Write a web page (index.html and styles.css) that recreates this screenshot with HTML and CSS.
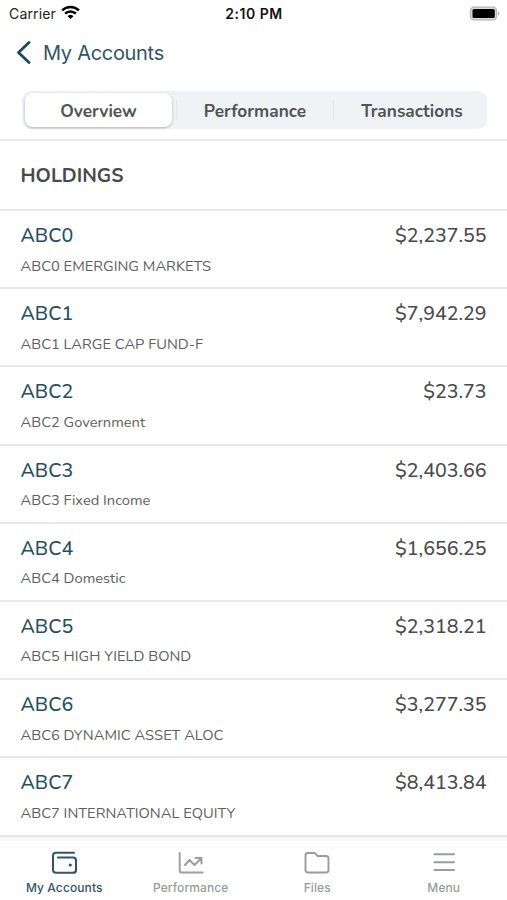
FILE: index.html
```html
<!DOCTYPE html>
<html lang="en">
<head>
<meta charset="utf-8">
<title>My Accounts</title>
<link rel="stylesheet" href="styles.css">
</head>
<body>
<div class="status">
  <div class="carrier"><span class="carrier-name">Carrier</span>
    <svg width="19" height="15" viewBox="0 0 19 15" fill="none" stroke="#000" stroke-width="2.5"><path d="M1.1 5.4a12 12 0 0 1 16.8 0M4.1 8.7a7.7 7.7 0 0 1 10.8 0"/><path d="M9.5 14l-2.9-2.8a4.2 4.2 0 0 1 5.8 0z" fill="#000" stroke="none"/></svg>
  </div>
  <div class="time">2:10 PM</div>
  <svg class="battery" width="31" height="15" viewBox="0 0 31 15"><rect x="1.500" y="1.200" width="26" height="12.600" rx="3.500" fill="#ddd" stroke="#b5b5b5" stroke-width="1.300"/><rect x="3.500" y="3" width="22.300" height="9" rx="1.500" fill="#000"/><path d="M29 5.200q3 2.200 0 4.500z" fill="#b5b5b5"/></svg>
</div>
<header class="title">
  <svg width="15" height="24" viewBox="0 0 15 24" fill="none" stroke="#1b485e" stroke-width="2.8" stroke-linecap="round" stroke-linejoin="round"><path d="M13 1.500L2.500 11.500l10.500 10"/></svg>
  <span>My Accounts</span>
</header>
<div class="tabs">
  <div class="tab active"><span>Overview</span></div>
  <div class="tab"><span>Performance</span></div>
  <div class="tab"><span>Transactions</span></div>
</div>
<main class="content">
  <h1 class="heading"><span>HOLDINGS</span></h1>
  <section class="row"><div class="line"><b>ABC0</b><span class="amount">$2,237.55</span></div><p>ABC0 EMERGING MARKETS</p></section>
  <section class="row"><div class="line"><b>ABC1</b><span class="amount">$7,942.29</span></div><p>ABC1 LARGE CAP FUND-F</p></section>
  <section class="row"><div class="line"><b>ABC2</b><span class="amount">$23.73</span></div><p>ABC2 Government</p></section>
  <section class="row"><div class="line"><b>ABC3</b><span class="amount">$2,403.66</span></div><p>ABC3 Fixed Income</p></section>
  <section class="row"><div class="line"><b>ABC4</b><span class="amount">$1,656.25</span></div><p>ABC4 Domestic</p></section>
  <section class="row"><div class="line"><b>ABC5</b><span class="amount">$2,318.21</span></div><p>ABC5 HIGH YIELD BOND</p></section>
  <section class="row"><div class="line"><b>ABC6</b><span class="amount">$3,277.35</span></div><p>ABC6 DYNAMIC ASSET ALOC</p></section>
  <section class="row"><div class="line"><b>ABC7</b><span class="amount">$8,413.84</span></div><p>ABC7 INTERNATIONAL EQUITY</p></section>
</main>
<nav class="bar">
  <div class="item current">
    <svg width="26" height="24" viewBox="0 0 26 24" fill="none" stroke="currentColor" stroke-width="2.1" stroke-linecap="round" stroke-linejoin="round"><path d="M23 1.800H5Q2 1.800 2 4.800v14q0 3 3 3h17q3 0 3-3V9.500q0-3-3-3H7"/><circle cx="19.300" cy="14" r="1.600" fill="currentColor" stroke="none"/></svg>
    <span>My Accounts</span>
  </div>
  <div class="item">
    <svg width="26" height="24" viewBox="0 0 26 24" fill="none" stroke="currentColor" stroke-width="1.900" stroke-linecap="round" stroke-linejoin="round"><path d="M1.700 2v17.500q0 2 2 2h21M7 14l4.500-5 5 5L23 7.500M17.500 7H23.500V12.500"/></svg>
    <span>Performance</span>
  </div>
  <div class="item">
    <svg width="26" height="24" viewBox="0 0 26 24" fill="none" stroke="currentColor" stroke-width="1.900" stroke-linejoin="round"><path d="M4 2h6q1 0 1.700.8l2 2.200h8.300q2.500 0 2.500 2.500v11.500q0 2.500-2.500 2.500H4q-2.500 0-2.500-2.500V4.500Q1.500 2 4 2z"/></svg>
    <span>Files</span>
  </div>
  <div class="item">
    <svg width="26" height="24" viewBox="0 0 26 24" fill="none" stroke="currentColor" stroke-width="2" stroke-linecap="round"><path d="M3.500 3.300h19.500M3.500 11.200h19.500M3.500 19h19.500"/></svg>
    <span>Menu</span>
  </div>
</nav>
</body>
</html>
```
FILE: styles.css
```css
* { box-sizing: border-box; }
body {
  margin: 0;
  width: 507px;
  height: 900px;
  overflow: hidden;
  display: flex;
  flex-direction: column;
  background: #fff;
  font-family: Nunito, Lato, sans-serif;
  color: #484a4c;
}
.status {
  height: 27px;
  flex: none;
  display: grid;
  grid-template-columns: 1fr auto 1fr;
  padding: 0 7px 0 9px;
  align-items: center;
  font-family: Inter, sans-serif;
  font-size: 14px;
  color: #222;
}
.carrier { display: flex; align-items: center; gap: 5px; letter-spacing: 0.15px; }
.carrier svg { margin-top: -2px; }
.time { font-weight: 600; color: #111; letter-spacing: 0.5px; margin-right: 1px; }
.battery { justify-self: end; }
.title {
  height: 50px;
  flex: none;
  display: flex;
  align-items: center;
  gap: 12px;
  padding: 1px 0 0 16px;
  font-family: Inter, sans-serif;
  font-size: 20px;
  letter-spacing: -0.3px;
  color: #315469;
}
.title span { margin-top: 1px; }
.tabs {
  height: 38px;
  flex: none;
  margin: 14px 20px 10px 22px;
  padding: 2px;
  display: grid;
  grid-template-columns: 149px 161px 1fr;
  border-radius: 9px;
  background: #f0f3f6;
}
.tab {
  display: flex;
  align-items: center;
  justify-content: center;
  padding-top: 2px;
  font-size: 17.300px;
  font-weight: 700;
  color: #515355;
}
.active {
  margin: 0 1px;
  background: #fff;
  border-radius: 8px;
  box-shadow: 0 1px 3px #0004;
}
.tab:nth-child(2) span { margin-left: 3px; }
.tab:nth-child(3) span { margin-left: 5px; }
.tab:nth-child(2) {
  background: linear-gradient(#e1e5e8, #e1e5e8) 3px 50% / 1px 20px no-repeat,
    linear-gradient(#e1e5e8, #e1e5e8) 100% 50% / 1px 20px no-repeat;
}
.content { flex: 1; min-height: 0; overflow: hidden; border-top: 2px solid #ebebec; }
.heading {
  margin: 0;
  height: 68px;
  display: flex;
  align-items: center;
  padding: 0 20.500px;
  font-size: 19.500px;
  font-weight: 700;
}
.row {
  height: 78.200px;
  padding: 11px 20.500px 0 20.500px;
  border-top: 2px solid #e9e9ea;
}
.line { display: flex; justify-content: space-between; font-size: 19.600px; line-height: 28px; }
.line b { font-weight: 500; color: #244f62; }
.amount { font-weight: 500; }
.row p { margin: 5.500px 0 0; font-size: 14.700px; line-height: 20px; color: #5c5e60; }
.bar {
  height: 65.500px;
  flex: none;
  border-top: 2px solid #e4e5e6;
  box-shadow: inset 0 4px #f7f7f7;
  display: grid;
  grid-template-columns: repeat(4, 1fr);
  padding-left: 1px;
  font-family: Inter, sans-serif;
}
.item {
  display: flex;
  flex-direction: column;
  align-items: center;
  padding-top: 14px;
  font-size: 12px;
  line-height: 15px;
  font-weight: 500;
  letter-spacing: 0.1px;
  color: #999b9d;
}
.item span { margin-top: 5px; }
.current { color: #315469; }
```
